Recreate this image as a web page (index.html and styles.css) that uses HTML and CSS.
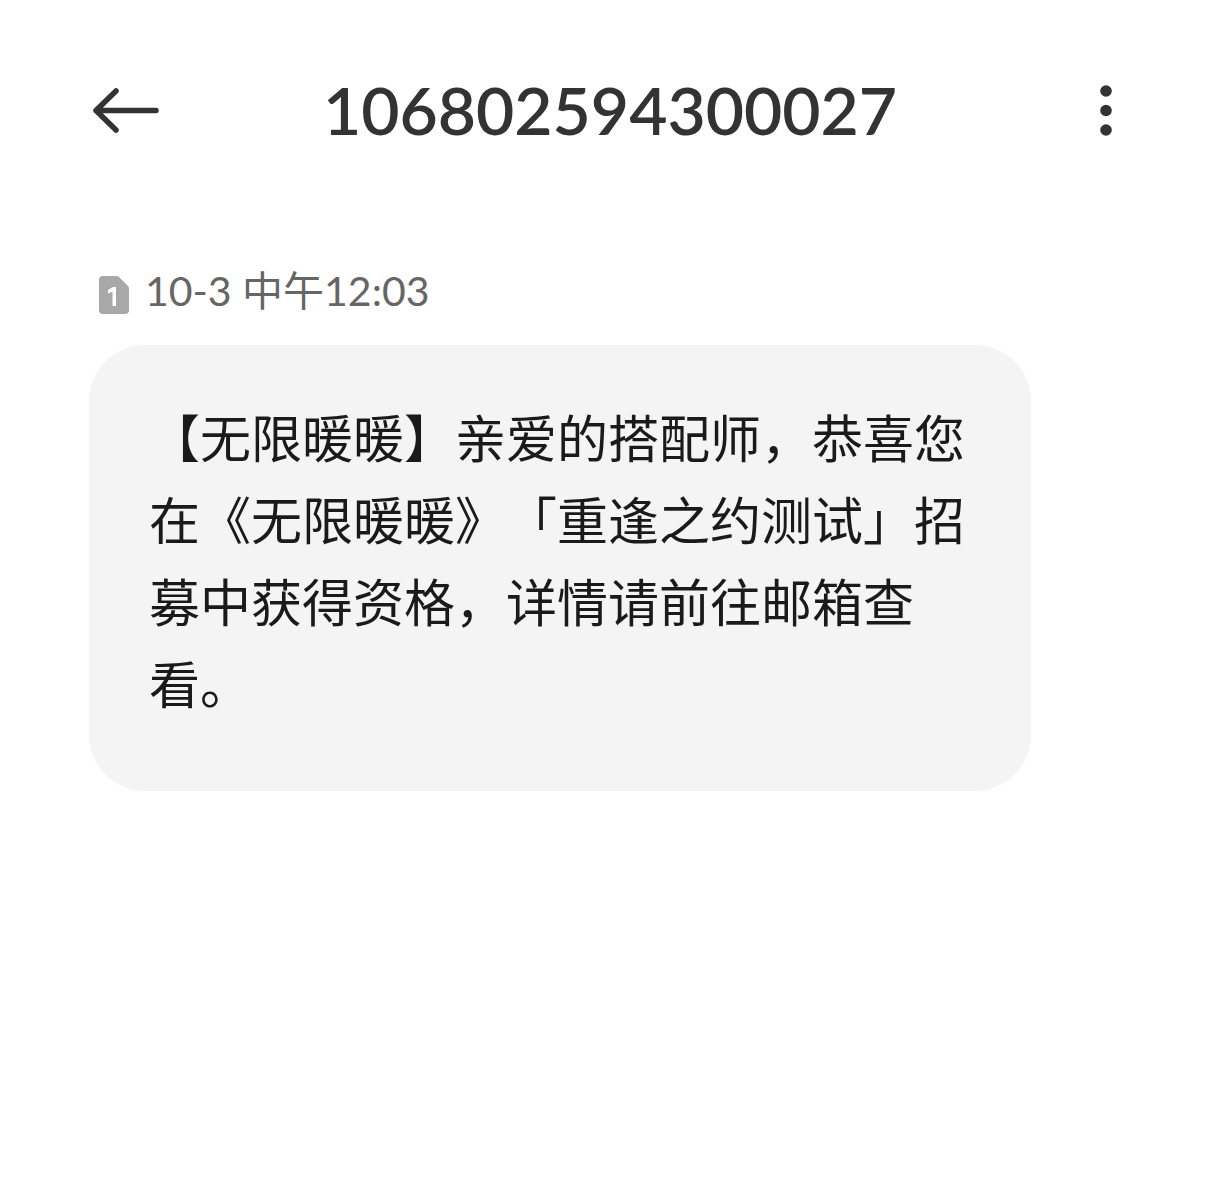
FILE: index.html
```html
<!DOCTYPE html>
<html lang="zh-CN">
<head>
<meta charset="utf-8">
<meta name="viewport" content="width=device-width, initial-scale=1">
<title>106802594300027</title>
<link rel="stylesheet" href="styles.css">
</head>
<body>
<header class="topbar">
  <button class="icon-button" type="button" aria-label="返回">
    <svg width="72" height="52" viewBox="0 0 72 52" fill="none" stroke="currentColor" stroke-width="5.500" stroke-linecap="round" stroke-linejoin="round"><path d="M67 26.500H7M27 7L7 26.500L27 46" /></svg>
  </button>
  <h1 class="title">106802594300027</h1>
  <button class="icon-button icon-button-end" type="button" aria-label="更多">
    <svg width="12" height="52" viewBox="0 0 12 52" fill="currentColor"><circle cx="6" cy="7" r="5.800"/><circle cx="6" cy="26.500" r="5.800"/><circle cx="6" cy="46" r="5.800"/></svg>
  </button>
</header>
<main class="thread">
  <div class="meta">
    <svg width="30" height="38" viewBox="0 0 30 38" role="img" aria-label="SIM 1"><path fill="#a8a8a8" d="M4 0H17Q19 0 20 1L29 10Q30 11 30 13V34Q30 38 26 38H4Q0 38 0 34V4Q0 0 4 0Z"/><path fill="#fff" d="M9 14L14 11H17V30H13.500V15.500L9 17.500Z"/></svg>
    <time class="time">10-3 中午12:03</time>
  </div>
  <p class="bubble">【无限暖暖】亲爱的搭配师，恭喜您在《无限暖暖》「重逢之约测试」招募中获得资格，详情请前往邮箱查看。</p>
</main>
</body>
</html>
```
FILE: styles.css
```css
* { box-sizing: border-box; }
body {
  margin: 0;
  background: #fff;
  font-family: "Noto Sans CJK SC", sans-serif;
}
.topbar {
  display: grid;
  grid-template-columns: 80px 1fr 80px;
  align-items: center;
  padding: 60px 89px 0;
  color: #333;
}
.icon-button {
  display: flex;
  align-items: center;
  height: 100px;
  padding: 0;
  border: 0;
  background: none;
  color: inherit;
}
.icon-button-end { justify-content: flex-end; padding-right: 19px; }
.title {
  margin: 0;
  text-align: center;
  font: 600 66px/100px Lato, sans-serif;
}
.thread { padding: 104px 89px 60px; }
.meta {
  display: flex;
  align-items: flex-end;
  gap: 16px;
  padding-left: 10px;
}
.meta svg { margin-bottom: 4px; }
.time {
  font: 41px/54px Lato, "Noto Sans CJK SC", sans-serif;
  color: #666;
}
.bubble {
  max-width: 942px;
  margin: 27px 0 0;
  padding: 50px 60px 68px;
  border-radius: 56px;
  background: #f4f4f4;
  color: #1a1a1a;
  font-size: 51px;
  line-height: 82px;
  text-spacing-trim: space-all;
}
```
